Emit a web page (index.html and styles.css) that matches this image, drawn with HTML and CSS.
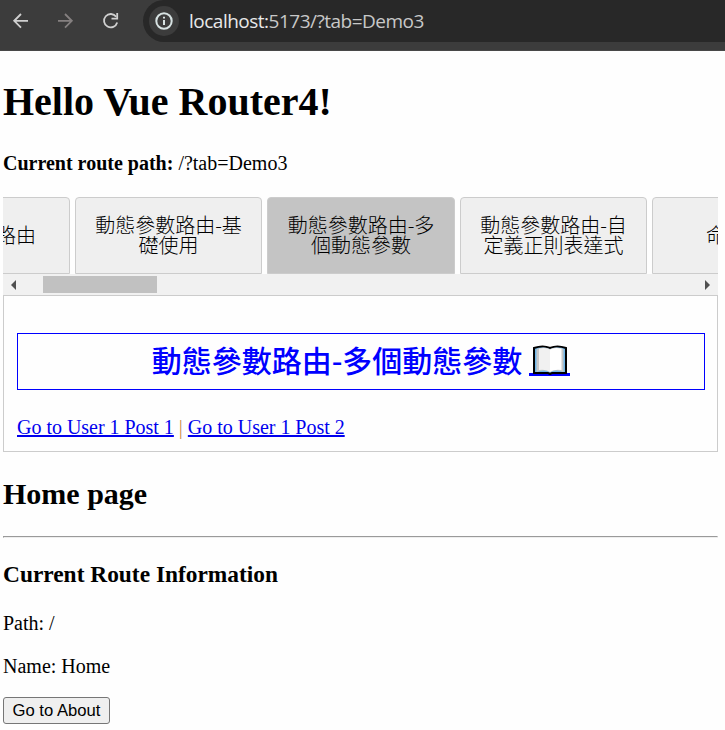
FILE: index.html
```html
<!DOCTYPE html>
<html lang="zh-Hant">
<head>
<meta charset="utf-8">
<title>Vue Router</title>
<link rel="stylesheet" href="styles.css">
</head>
<body>
<header class="toolbar">
  <svg class="nav-icons" width="143" height="42" viewBox="0 0 143 42" fill="none" stroke-width="1.8">
    <path stroke="#d0d0d0" d="M28 20.8H14.5M21 14L14.2 20.8L21 27.6"/>
    <path stroke="#858080" d="M58 20.8H71.5M65 14L71.8 20.8L65 27.6"/>
    <path stroke="#d0d0d0" d="M116.2 16.8A6.7 6.7 0 1 0 117.2 22.5"/>
    <path stroke="#d0d0d0" d="M117.2 13V18.6H111.5"/>
  </svg>
  <div class="address">
    <span class="info">
      <svg width="18" height="18" viewBox="0 0 18 18" fill="none" stroke="#d7e2e2" stroke-width="2"><circle cx="9" cy="9" r="7.7"/><path d="M9 8V13M9 4.7V6.5"/></svg>
    </span>
    <span class="url"><b>localhost:</b>5173/?tab=Demo3</span>
  </div>
</header>
<main>
  <h1>Hello Vue Router4!</h1>
  <p class="route"><strong>Current route path:</strong> /?tab=Demo3</p>
  <nav class="tabs">
    <div class="tab">基本使用路由</div>
    <div class="tab">動態參數路由-基<br>礎使用</div>
    <div class="tab active">動態參數路由-多<br>個動態參數</div>
    <div class="tab">動態參數路由-自<br>定義正則表達式</div>
    <div class="tab">命名視圖</div>
  </nav>
  <div class="scrollbar">
    <i class="arrow left"></i><i class="thumb"></i><i class="arrow right"></i>
  </div>
  <section class="panel">
    <h2 class="demo"><span>動態參數路由-多個動態參數</span><a class="book"><svg width="36" height="30" viewBox="0 0 36 30"><path d="M2 3Q11 0 18 3Q25 0 34 3V28H20L18 29L16 28H2Z" fill="#72b8e8" stroke="#000" stroke-width="2"/><path d="M4.5 4Q12 1 18 4V27Q12 24 4.5 27Z" fill="#c8c8c8"/><path d="M7 3.5Q14 2 18 4.5V27Q14 24 7 25Z" fill="#f1f1f1"/><path d="M18 4Q24 1 31.5 4V27Q24 24 18 27Z" fill="#c8c8c8"/><path d="M18 4.5Q22 2 29.5 3.5V25Q22 24 18 27Z" fill="#fff"/></svg></a></h2>
    <p class="links"><a>Go to User 1 Post 1</a> <span>|</span> <a>Go to User 1 Post 2</a></p>
  </section>
  <h2 class="home">Home page</h2>
  <hr>
  <h3>Current Route Information</h3>
  <p>Path: /</p>
  <p class="name">Name: Home</p>
  <button>Go to About</button>
</main>
</body>
</html>
```
FILE: styles.css
```css
* { box-sizing: border-box; }
body { margin: 0; height: 730px; overflow: hidden; background: #fefefe; color: #000; font: 20px/23px "Liberation Serif", serif; }
.toolbar { display: flex; height: 51px; background: #3c3c3c; border-bottom: 1px solid #484848; }
.nav-icons { flex: none; }
.address { flex: 1; height: 42px; display: flex; align-items: center; padding-left: 6px; background: #282828; border-radius: 21px 0 0 21px; }
.info { display: flex; align-items: center; justify-content: center; width: 30px; height: 30px; border-radius: 50%; background: #3c3c3c; }
.url { margin-left: 10px; color: #c8c8c8; font: 19px/42px "Open Sans", sans-serif; letter-spacing: -0.5px; }
.url b { color: #e8e8e8; font-weight: 400; }
main { padding: 28px 7px 0 3px; }
h1 { margin: 0; font-size: 40px; line-height: 46px; }
p { margin: 0 0 20px; }
.route { margin: 27px 0 22px; }
.tabs { display: flex; gap: 5px; justify-content: center; height: 77px; overflow: hidden; padding-left: 1px; }
.tab { flex: none; display: flex; align-items: center; justify-content: center; text-align: center; width: 187.5px; height: 77px; padding-bottom: 2px; border: 1px solid #ccc; border-radius: 4px 4px 0 0; background: #efefef; font: 300 20px/20px "Noto Sans CJK TC", sans-serif; }
.active { background: #c4c4c4; }
.scrollbar { display: flex; align-items: center; height: 21px; background: #f1f1f1; padding: 0 8px; }
.arrow { border: 5px solid transparent; }
.left { border-right-color: #505050; border-left: 0; }
.right { border-left-color: #505050; border-right: 0; margin-left: auto; }
.thumb { width: 114px; height: 17px; background: #c1c1c1; margin-left: 27px; }
.panel { height: 157px; border: 1px solid #ccc; padding: 37px 12px 0 13px; }
.demo { display: flex; align-items: center; justify-content: center; height: 57px; padding-bottom: 4px; margin: 0 0 26px; border: 1px solid #00f; color: #00f; font: 500 30px/51px "Noto Sans CJK TC", sans-serif; }
.book { height: 31px; margin: 1px 0 0 7px; width: 41px; display: flex; justify-content: center; border-bottom: 3px solid #00f; }
.book svg { flex: none; }
.links { margin: 0; }
.links a { color: #00e; text-decoration: underline; }
.links a, .links span { letter-spacing: -0.02px; }
.links span { color: #c98b4c; }
h2.home { margin: 24px 0 25px; font-size: 30px; line-height: 35px; }
hr { margin: 0; }
h3 { margin: 23px 0 24px; font-size: 23.4px; line-height: 27px; }
.name { margin-bottom: 19px; }
button { display: block; height: 27px; width: 107px; padding: 0; border: 1px solid #767676; border-radius: 3px; background: #efefef; color: #000; font: 16.67px/24px "Liberation Sans", sans-serif; }
```
